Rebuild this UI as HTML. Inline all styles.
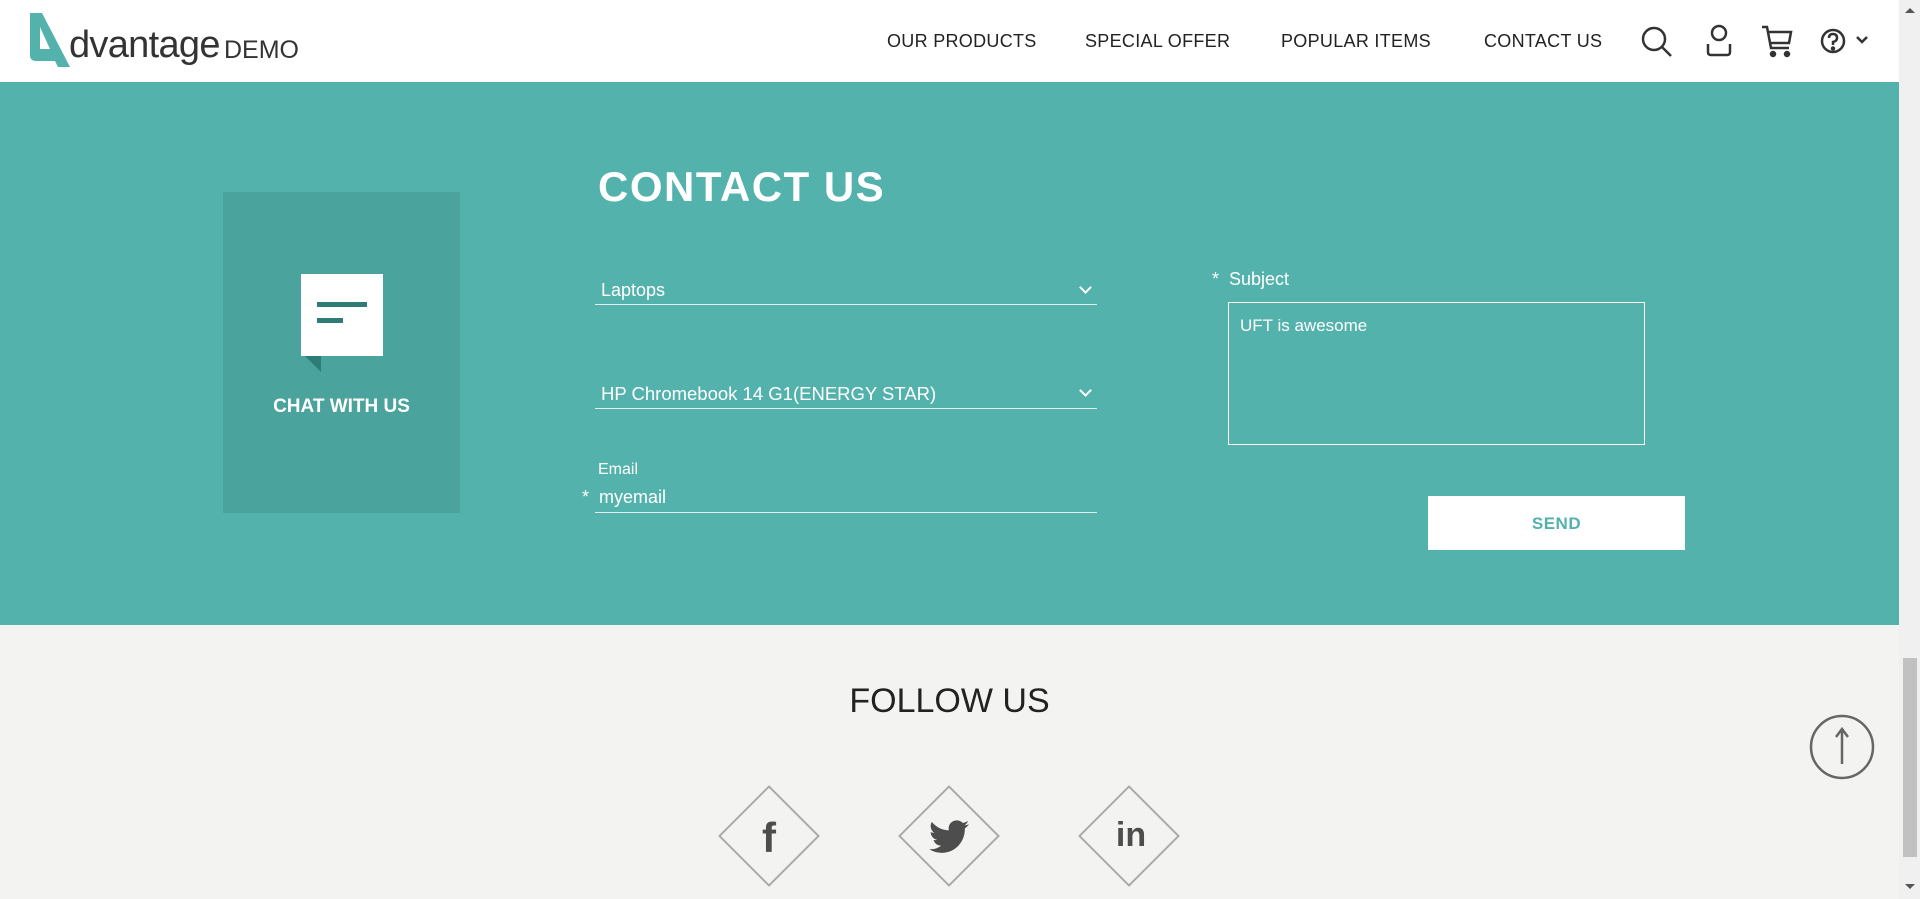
<!DOCTYPE html>
<html><head><meta charset="utf-8"><style>
*{margin:0;padding:0;box-sizing:border-box}
body{width:1920px;height:899px;overflow:hidden;font-family:"Liberation Sans",Arial,sans-serif;background:#f3f3f2;position:relative}
.abs{position:absolute}
#hdr{left:0;top:0;width:1899px;height:82px;background:#fff}
.nav{top:31px;font-size:18px;color:#222;letter-spacing:.3px}
#teal{left:0;top:82px;width:1899px;height:543px;background:#54b2ad}
.w{color:#fff}
.line{height:1px;background:#e0f0ee}
.chev{width:9px;height:9px;border-right:2px solid #fff;border-bottom:2px solid #fff;transform:rotate(45deg)}
#sb{left:1899px;top:0;width:21px;height:899px;background:#f0f0f0}
</style></head><body>
<div id="hdr" class="abs"></div>
<svg class="abs" style="left:28px;top:13px" width="44" height="56" viewBox="0 0 44 56"><path d="M2 0 H14 L42 54 H30 L27 48 H8 Q2 48 2 42 Z M12 14 V36 H22 Z" fill="#54b2ad" fill-rule="evenodd"/></svg>
<div class="abs" style="left:69px;top:24px;font-size:38px;color:#333;letter-spacing:-.7px">dvantage</div>
<div class="abs" style="left:224px;top:36px;font-size:25px;color:#333">DEMO</div>
<div class="abs nav" style="left:887px">OUR PRODUCTS</div>
<div class="abs nav" style="left:1085px">SPECIAL OFFER</div>
<div class="abs nav" style="left:1281px">POPULAR ITEMS</div>
<div class="abs nav" style="left:1484px">CONTACT US</div>
<svg class="abs" style="left:1640px;top:24px" width="36" height="36" viewBox="0 0 36 36" fill="none" stroke="#333" stroke-width="2.5"><circle cx="14" cy="15" r="11"/><path d="M22 23 L31 32"/></svg>
<svg class="abs" style="left:1704px;top:24px" width="30" height="34" viewBox="0 0 30 34" fill="none" stroke="#333" stroke-width="2.5"><circle cx="15" cy="9" r="7"/><path d="M4 20 V28 Q4 31 7 31 H23 Q26 31 26 28 V20"/></svg>
<svg class="abs" style="left:1760px;top:24px" width="34" height="34" viewBox="0 0 34 34" fill="none" stroke="#333" stroke-width="2.5"><path d="M2 3 H7 L11 24 H29 M9 8 H31 L29 19 H10"/><circle cx="13" cy="30" r="2" fill="#333"/><circle cx="27" cy="30" r="2" fill="#333"/></svg>
<svg class="abs" style="left:1820px;top:28px" width="50" height="28" viewBox="0 0 50 28" fill="none" stroke="#333" stroke-width="2.5"><circle cx="13" cy="13" r="11"/><path d="M9 10 Q9 6 13 6 Q17 6 17 10 Q17 13 13 14 V17"/><circle cx="13" cy="20.5" r="1" fill="#333"/><path d="M37 9 L42 14 L47 9"/></svg>

<div id="teal" class="abs"></div>
<div class="abs" style="left:223px;top:192px;width:237px;height:321px;background:#4aa39c"></div>
<svg class="abs" style="left:301px;top:274px" width="82" height="102" viewBox="0 0 82 102"><rect x="0" y="0" width="82" height="82" fill="#fff"/><path d="M4 82 L20 82 L20 98 Z" fill="#2d7c76"/><rect x="16" y="28" width="50" height="5" fill="#2d7c76"/><rect x="16" y="44" width="26" height="5" fill="#2d7c76"/></svg>
<div class="abs w" style="left:223px;width:237px;top:396px;text-align:center;font-size:19px;font-weight:bold">CHAT WITH US</div>
<div class="abs w" style="left:598px;top:163px;font-size:42px;font-weight:bold;letter-spacing:1.5px">CONTACT US</div>
<div class="abs w" style="left:601px;top:280px;font-size:18px">Laptops</div>
<div class="abs chev" style="left:1081px;top:283px"></div>
<div class="abs line" style="left:595px;top:304px;width:502px"></div>
<div class="abs w" style="left:601px;top:383px;font-size:18.5px">HP Chromebook 14 G1(ENERGY STAR)</div>
<div class="abs chev" style="left:1081px;top:386px"></div>
<div class="abs line" style="left:595px;top:408px;width:502px"></div>
<div class="abs w" style="left:598px;top:461px;font-size:16px">Email</div>
<div class="abs w" style="left:582px;top:487px;font-size:18px">*</div>
<div class="abs w" style="left:599px;top:487px;font-size:18px">myemail</div>
<div class="abs line" style="left:595px;top:512px;width:502px"></div>
<div class="abs w" style="left:1212px;top:269px;font-size:18px">*&nbsp;&nbsp;Subject</div>
<div class="abs" style="left:1228px;top:302px;width:417px;height:143px;border:1px solid #fff"></div>
<div class="abs w" style="left:1240px;top:316px;font-size:17px">UFT is awesome</div>
<div class="abs" style="left:1428px;top:496px;width:257px;height:54px;background:#fff;color:#54b2ad;font-size:17px;font-weight:bold;text-align:center;line-height:56px;letter-spacing:.5px">SEND</div>

<div class="abs" style="left:0;width:1899px;top:682px;text-align:center;font-size:34px;color:#222">FOLLOW US</div>
<div class="abs" style="left:733px;top:800px;width:72px;height:72px;border:2px solid #aaa;transform:rotate(45deg)"></div>
<div class="abs" style="left:913px;top:800px;width:72px;height:72px;border:2px solid #aaa;transform:rotate(45deg)"></div>
<div class="abs" style="left:1093px;top:800px;width:72px;height:72px;border:2px solid #aaa;transform:rotate(45deg)"></div>
<div class="abs" style="left:749px;width:40px;text-align:center;top:814px;font-size:42px;font-weight:bold;color:#4d4d4d">f</div>
<svg class="abs" style="left:929px;top:820px" width="40" height="34" viewBox="0 0 24 20"><path fill="#4d4d4d" d="M24 2.3c-.9.4-1.8.7-2.8.8 1-.6 1.8-1.6 2.2-2.7-1 .6-2 1-3.1 1.2A4.9 4.9 0 0 0 11.9 6 14 14 0 0 1 1.7.9a4.9 4.9 0 0 0 1.5 6.6c-.8 0-1.6-.2-2.2-.6 0 2.4 1.7 4.4 3.9 4.8-.7.2-1.5.2-2.2.1.6 2 2.4 3.4 4.6 3.4A9.9 9.9 0 0 1 0 17.3 14 14 0 0 0 7.5 19.5c9.1 0 14-7.5 14-14v-.6c1-.7 1.8-1.6 2.5-2.6z"/></svg>
<div class="abs" style="left:1109px;width:44px;text-align:center;top:816px;font-size:34px;font-weight:bold;color:#4d4d4d">in</div>

<svg class="abs" style="left:1809px;top:714px" width="66" height="66" viewBox="0 0 66 66" fill="none" stroke="#666" stroke-width="2.5"><circle cx="33" cy="33" r="31"/><path d="M33 50 V16 M27 23 L33 15 L39 23"/></svg>
<div id="sb" class="abs"></div>
<div class="abs" style="left:1903px;top:658px;width:14px;height:199px;background:#c1c1c1"></div>
<div class="abs" style="left:1905px;top:8px;width:0;height:0;border-left:5px solid transparent;border-right:5px solid transparent;border-bottom:5px solid #555"></div>
<div class="abs" style="left:1905px;top:884px;width:0;height:0;border-left:5px solid transparent;border-right:5px solid transparent;border-top:5px solid #555"></div>
</body></html>
